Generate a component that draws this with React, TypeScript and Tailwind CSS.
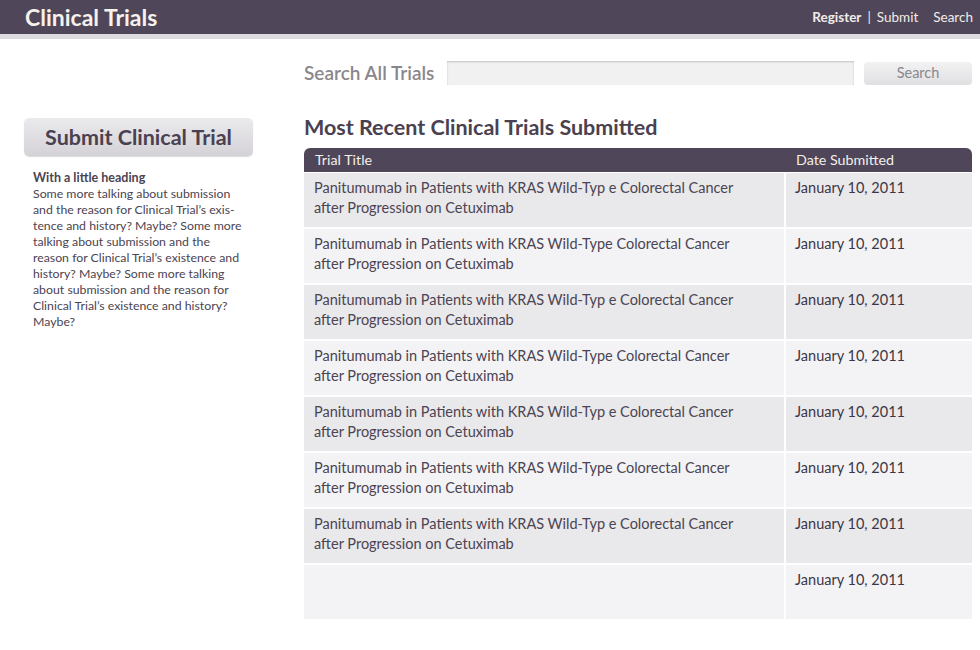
import React from "react"

const rows = [
	{ title: "Panitumumab in Patients with KRAS Wild-Typ e Colorectal Cancer", sub: "after Progression on Cetuximab" },
	{ title: "Panitumumab in Patients with KRAS Wild-Type Colorectal Cancer", sub: "after Progression on Cetuximab" },
	{ title: "Panitumumab in Patients with KRAS Wild-Typ e Colorectal Cancer", sub: "after Progression on Cetuximab" },
	{ title: "Panitumumab in Patients with KRAS Wild-Type Colorectal Cancer", sub: "after Progression on Cetuximab" },
	{ title: "Panitumumab in Patients with KRAS Wild-Typ e Colorectal Cancer", sub: "after Progression on Cetuximab" },
	{ title: "Panitumumab in Patients with KRAS Wild-Type Colorectal Cancer", sub: "after Progression on Cetuximab" },
	{ title: "Panitumumab in Patients with KRAS Wild-Typ e Colorectal Cancer", sub: "after Progression on Cetuximab" },
	{ title: "", sub: "" },
]

// sidebar copy, broken where the original wraps
const blurb = [
	"Some more talking about submission",
	"and the reason for Clinical Trial’s exis-",
	"tence and history? Maybe? Some more",
	"talking about submission and the",
	"reason for Clinical Trial’s existence and",
	"history? Maybe? Some more talking",
	"about submission and the reason for",
	"Clinical Trial’s existence and history?",
	"Maybe?",
]

const Header = () => (
	<header>
		<div className="flex h-[34px] items-center justify-between bg-[#4f4659] pl-[25px] pr-[7px]">
			<div className="text-[23px] font-bold text-[#f6f1ea]">Clinical Trials</div>
			<nav className="flex items-center text-[13.5px] text-[#f1ede6]">
				<span className="font-bold">Register</span>
				<span className="mx-[6px]">|</span>
				<span>Submit</span>
				<span className="ml-[15px]">Search</span>
			</nav>
		</div>
		<div className="h-[5px] bg-[#dcdadc]" />
	</header>
)

const Sidebar = () => (
	<aside className="w-[304px] shrink-0 pl-[24px] pt-[79px]">
		<div className="flex h-[38px] w-[229px] items-center justify-center rounded-[5px] bg-gradient-to-b from-[#ebeaed] to-[#d4d2d7] text-[21.5px] font-bold text-[#4a4150] shadow-[0_1px_1px_rgba(0,0,0,0.15)]">
			Submit Clinical Trial
		</div>
		<div className="mt-[14px] pl-[9px] text-[12.3px] leading-[16px] text-[#4b4452]">
			<div className="text-[12.5px] font-bold">With a little heading</div>
			{blurb.map((l, i) => (
				<div key={i} className="whitespace-nowrap">{l}</div>
			))}
		</div>
	</aside>
)

const TrialsTable = () => (
	<div className="w-[668px]">
		<div className="flex h-[24px] items-center rounded-t-[6px] bg-[#4f4659] text-[14.3px] text-[#f3efe9]">
			<div className="w-[482px] pl-[11px]">Trial Title</div>
			<div className="pl-[10px]">Date Submitted</div>
		</div>
		<div className="mt-[1px] flex flex-col gap-[2px]">
			{rows.map((r, i) => (
				<div key={i} className="flex h-[54px] gap-[2px]">
					<div className={`w-[480px] px-[10px] pt-[5px] text-[14.5px] leading-[20px] text-[#4b4452] ${i % 2 === 0 ? "bg-[#e9e8eb]" : "bg-[#f3f3f5]"}`}>
						<div>{r.title}</div>
						<div>{r.sub}</div>
					</div>
					<div className={`flex-1 pl-[9px] pt-[5px] text-[14.5px] leading-[20px] text-[#3d3644] ${i % 2 === 0 ? "bg-[#e9e8eb]" : "bg-[#f3f3f5]"}`}>
						January 10, 2011
					</div>
				</div>
			))}
		</div>
	</div>
)

export default function App() {
	return (
		<div className="min-h-[650px] bg-white font-['Lato','Open_Sans',sans-serif]">
			<Header />
			<div className="flex">
				<Sidebar />
				<main className="flex-1">
					<div className="mt-[20px] flex items-center">
						<div className="w-[143px] text-[19px] font-semibold text-[#8a878c]">Search All Trials</div>
						<div className="h-[24px] w-[407px] bg-[#f1f1f1] shadow-[inset_0_1px_2px_rgba(0,0,0,0.2)]" />
						<div className="ml-[10px] flex h-[23px] w-[108px] items-center justify-center rounded-[4px] bg-gradient-to-b from-[#f2f2f3] to-[#e0dfe2] text-[14.5px] text-[#8a878c]">
							Search
						</div>
					</div>
					<h1 className="mt-[23px] text-[21.5px] font-bold text-[#4a4150]">Most Recent Clinical Trials Submitted</h1>
					<div className="mt-[5px]">
						<TrialsTable />
					</div>
				</main>
			</div>
		</div>
	)
}
